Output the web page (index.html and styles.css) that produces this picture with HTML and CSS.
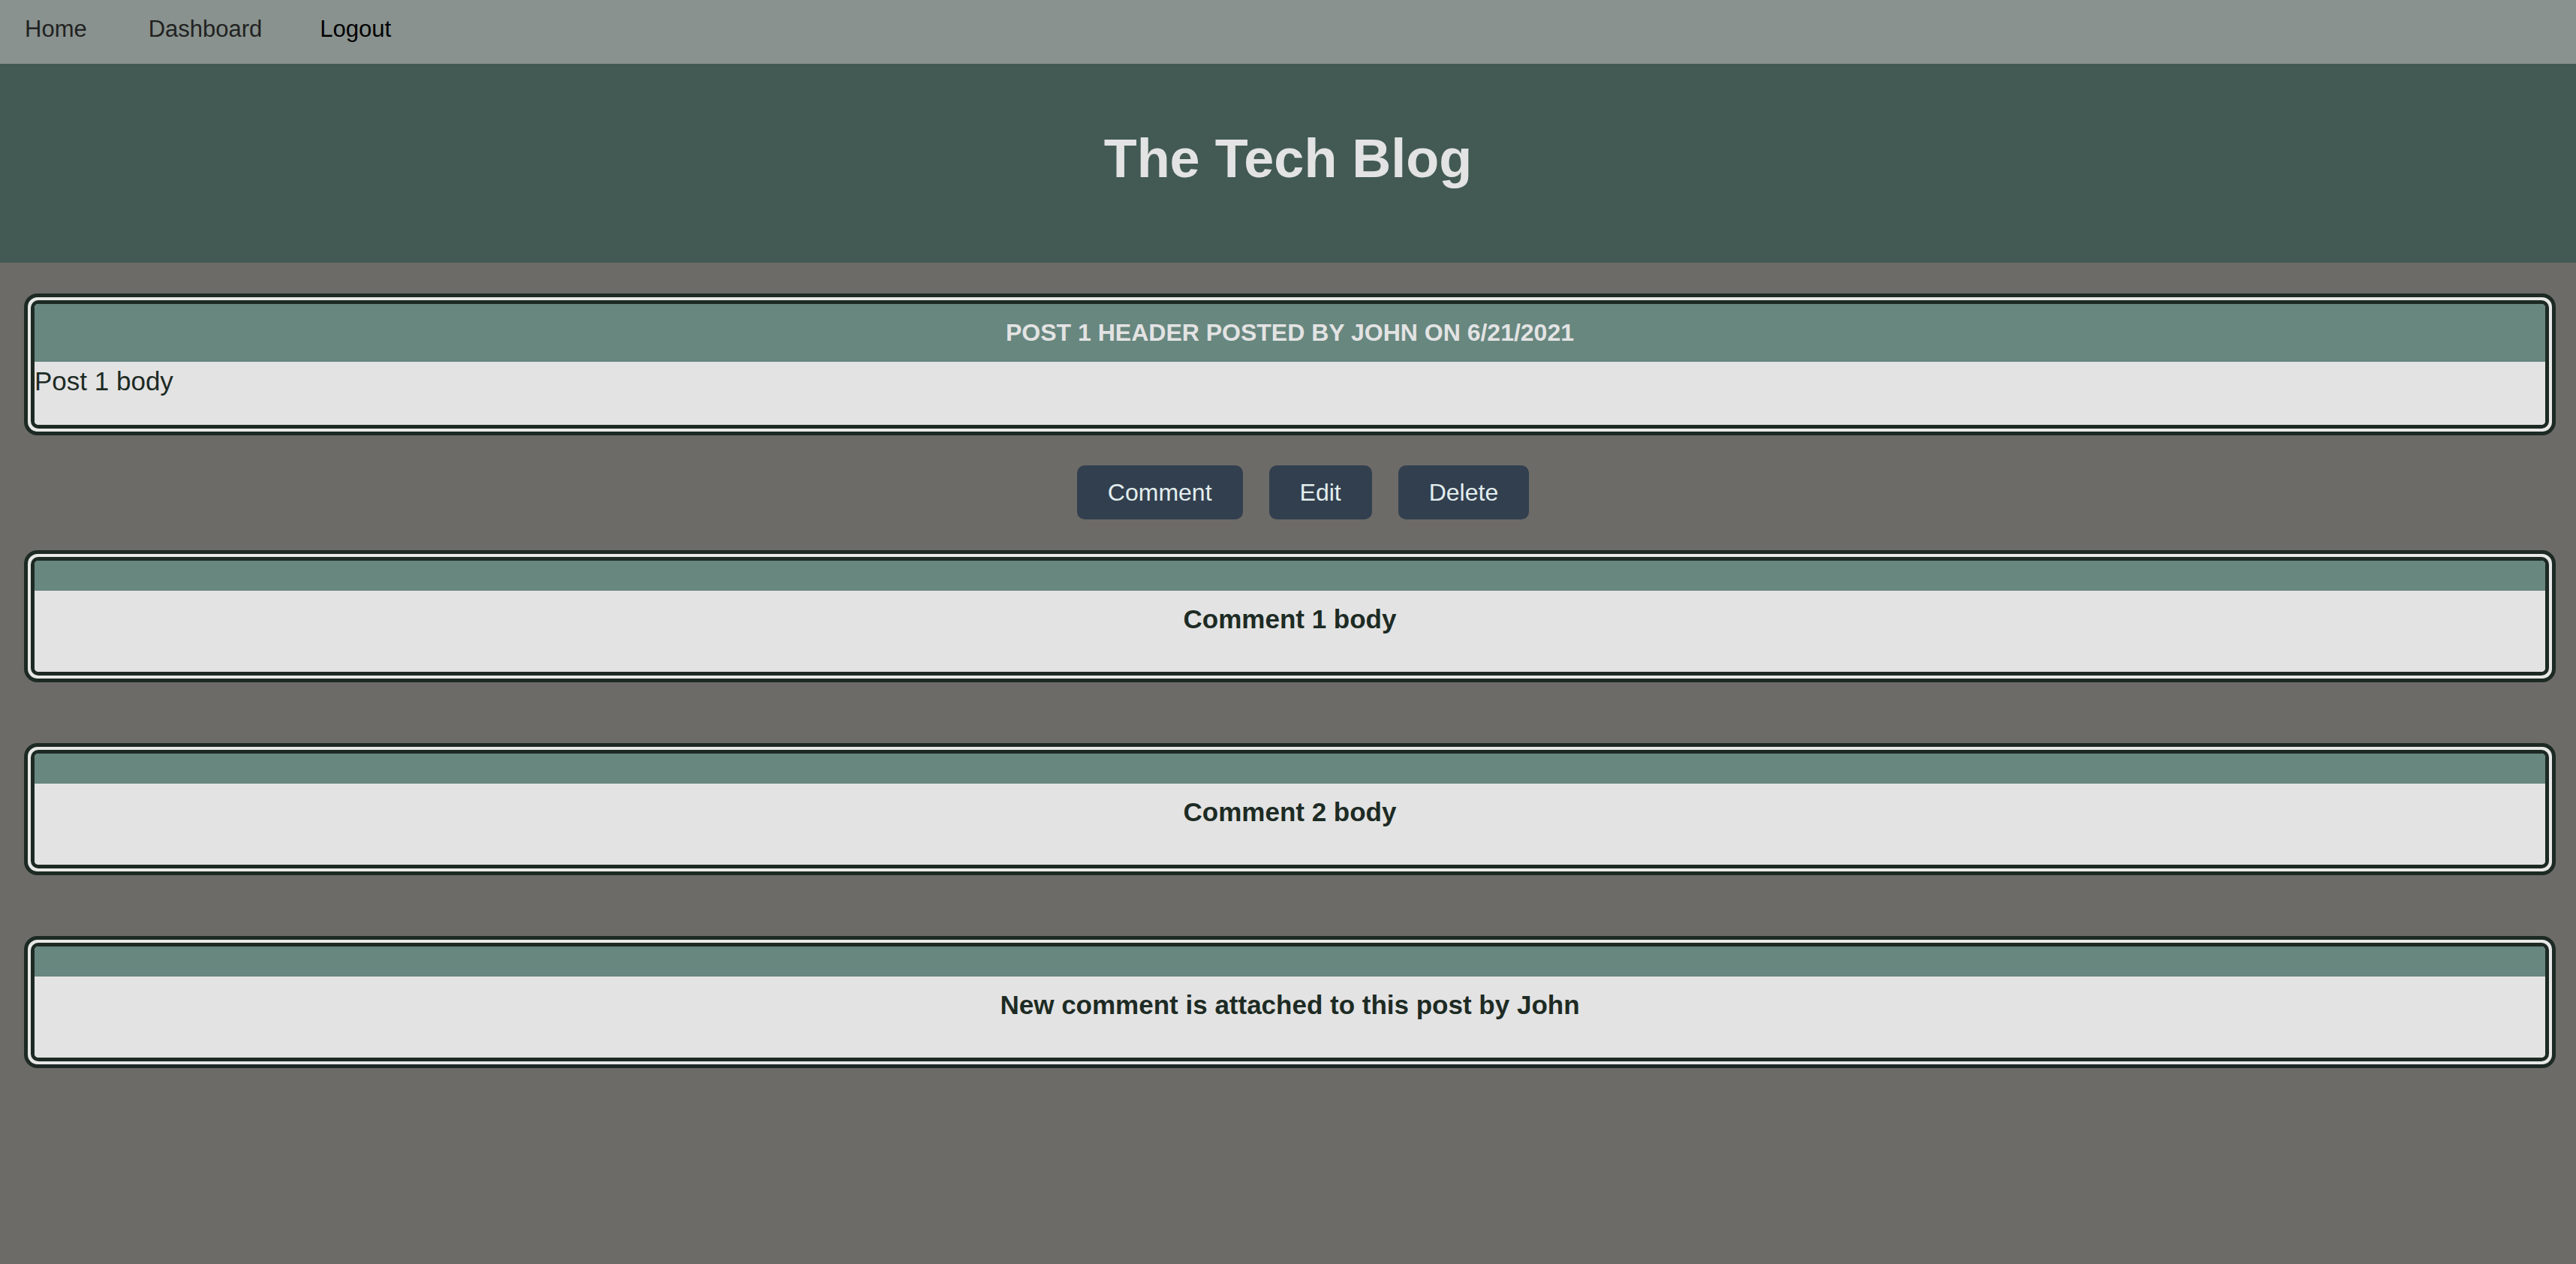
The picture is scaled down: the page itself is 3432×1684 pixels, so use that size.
FILE: index.html
```html
<!DOCTYPE html>
<html lang="en">
<head>
<meta charset="utf-8">
<title>The Tech Blog</title>
<link rel="stylesheet" href="styles.css">
</head>
<body>
  <nav class="topnav">
    <a class="nav-link nav-home" href="#">Home</a>
    <a class="nav-link nav-dash" href="#">Dashboard</a>
    <a class="nav-link nav-logout" href="#">Logout</a>
  </nav>
  <header class="site-header">
    <h1 class="site-title">The Tech Blog</h1>
  </header>
  <main class="content">
    <article class="card post-card">
      <div class="card-inner">
        <div class="card-head post-head">POST 1 HEADER POSTED BY JOHN ON 6/21/2021</div>
        <div class="card-body post-body">Post 1 body</div>
      </div>
    </article>
    <div class="actions">
      <button class="btn">Comment</button>
      <button class="btn">Edit</button>
      <button class="btn">Delete</button>
    </div>
    <section class="comments">
      <article class="card comment-card">
        <div class="card-inner">
          <div class="card-head comment-head"></div>
          <div class="card-body comment-body">Comment 1 body</div>
        </div>
      </article>
      <article class="card comment-card">
        <div class="card-inner">
          <div class="card-head comment-head"></div>
          <div class="card-body comment-body">Comment 2 body</div>
        </div>
      </article>
      <article class="card comment-card">
        <div class="card-inner">
          <div class="card-head comment-head"></div>
          <div class="card-body comment-body">New comment is attached to this post by John</div>
        </div>
      </article>
    </section>
  </main>
</body>
</html>
```
FILE: styles.css
```css
* { box-sizing: border-box; }

html, body {
  margin: 0;
  padding: 0;
}

body {
  background: #6d6b67;
  font-family: "Liberation Sans", Arial, sans-serif;
  min-height: 1684px;
}

.topnav {
  height: 85px;
  background: #89928e;
  display: flex;
  align-items: flex-start;
  padding: 21px 0 0 33px;
}

.nav-link {
  font-size: 31px;
  color: #222222;
  text-decoration: none;
  line-height: normal;
}

.nav-dash { margin-left: 82px; }
.nav-logout { margin-left: 77px; color: #000000; }

.site-header {
  height: 265px;
  background: #425a53;
  display: flex;
  justify-content: center;
  align-items: flex-start;
  padding-top: 85px;
}

.site-title {
  margin: 0;
  font-size: 72px;
  font-weight: bold;
  color: #e3e3e3;
  line-height: normal;
}

.content {
  padding: 41px 27px 0 32px;
}

.card {
  border: 5px solid #1d2a24;
  border-radius: 18px;
  padding: 4px;
  background: #e8e8e8;
}

.card-inner {
  border: 5px solid #1d2a24;
  border-radius: 10px;
  overflow: hidden;
  background: #e3e3e3;
}

.card-head {
  background: #67877f;
  color: #e3e3e3;
  font-weight: bold;
  display: flex;
  justify-content: center;
  align-items: center;
}

.post-head {
  height: 77px;
  font-size: 32px;
}

.card-body {
  background: #e3e3e3;
  color: #1d2b24;
  font-size: 35px;
  line-height: normal;
}

.post-body {
  height: 84px;
  padding-top: 6px;
}

.actions {
  display: flex;
  justify-content: center;
  margin-top: 40px;
}

.btn {
  margin-left: 35px;
  height: 72px;
  padding: 0 41px;
  background: #323f4f;
  color: #e2eeee;
  border: none;
  border-radius: 10px;
  font-family: "Liberation Sans", Arial, sans-serif;
  font-size: 32px;
  cursor: pointer;
}

.comments {
  margin-top: 41px;
  display: flex;
  flex-direction: column;
  gap: 81px;
}

.comment-head {
  height: 40px;
}

.comment-body {
  height: 108px;
  padding-top: 18px;
  text-align: center;
  font-weight: bold;
}
```
